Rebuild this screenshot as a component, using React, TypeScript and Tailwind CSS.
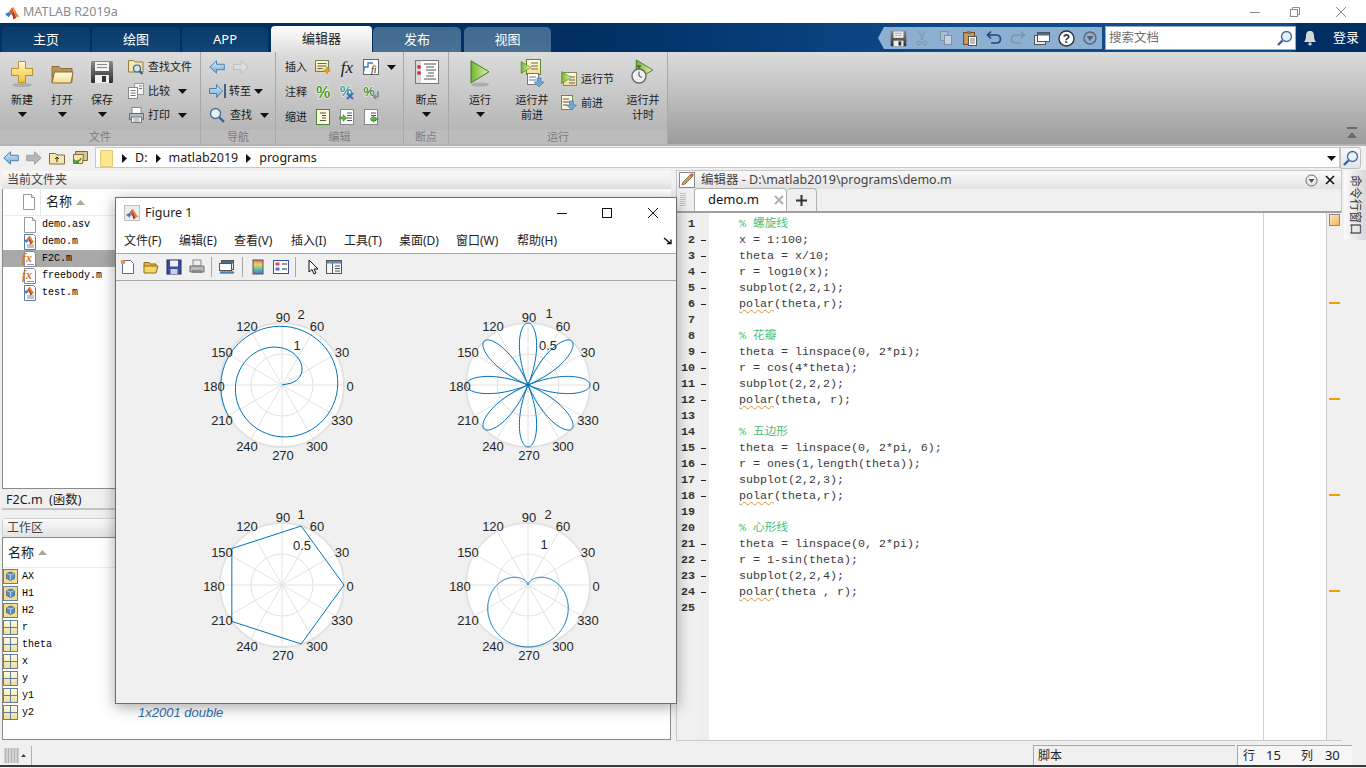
import React from "react";

type P = { children?: React.ReactNode; w?: number; h?: number };
const Svg = ({ w = 16, h = 16, children }: P) => (
  <svg width={w} height={h} viewBox={`0 0 ${w} ${h}`} className="block shrink-0">{children}</svg>
);

const Defs = () => (
  <svg width="0" height="0" className="block h-0 w-0 shrink-0">
    <defs>
      <linearGradient id="gy" x1="0" y1="0" x2="0" y2="1"><stop offset="0" stopColor="#fffbd0" /><stop offset="1" stopColor="#f2c02e" /></linearGradient>
      <linearGradient id="gp" x1="0" y1="0" x2="0" y2="1"><stop offset="0" stopColor="#fffde0" /><stop offset="1" stopColor="#f3dc8c" /></linearGradient>
      <linearGradient id="gb" x1="0" y1="0" x2="0" y2="1"><stop offset="0" stopColor="#dcecf8" /><stop offset="1" stopColor="#6ea8d8" /></linearGradient>
      <linearGradient id="gg" x1="0" y1="0" x2="1" y2="0"><stop offset="0" stopColor="#6fb52c" /><stop offset="1" stopColor="#e4f4b4" /></linearGradient>
      <linearGradient id="gd" x1="0" y1="0" x2="0" y2="1"><stop offset="0" stopColor="#8a8a8a" /><stop offset="1" stopColor="#2e2e2e" /></linearGradient>
      <linearGradient id="gc" x1="0" y1="0" x2="0" y2="1"><stop offset="0" stopColor="#f06060" /><stop offset=".3" stopColor="#f0d060" /><stop offset=".6" stopColor="#70c8a0" /><stop offset="1" stopColor="#5070d0" /></linearGradient>
    </defs>
  </svg>
);

const Caret = ({ c = "#111" }: { c?: string }) => (
  <svg width="9" height="5" viewBox="0 0 9 5" className="block shrink-0"><path d="M0 0h9L4.5 5z" fill={c} /></svg>
);

const Logo = ({ s = 16 }: { s?: number }) => (
  <svg width={s} height={s} viewBox="0 0 16 16" className="block shrink-0">
    <path d="M0 9.5l4-2 2.5 2L4 13z" fill="#3f7fc0" />
    <path d="M4 7.5L8 2l1 4-2.5 3.5z" fill="#d9602c" />
    <path d="M8 2c1.5 0 4 7 8 11-2-1-3-1-4 .5C10.500 10 9.500 6 8 2z" fill="#e8862a" />
    <path d="M6.500 9.500L9 6l3 7.500c-1.500 1-3 2-3 2-.5-3-1-5-2.500-6z" fill="#b8401c" />
  </svg>
);

const Page = ({ children }: P) => (
  <Svg>
    <path d="M2.500.5h8l3 3v12h-11z" fill="#fff" stroke="#9a9a9a" />
    <path d="M10.500.5v3h3" fill="#e8e8e8" stroke="#9a9a9a" />
    {children}
  </Svg>
);
const MFile = () => (
  <span className="relative block h-4 w-4 shrink-0">
    <Svg><path d="M2.500.5h9l2 2v13h-11z" fill="#fff" stroke="#5a7ba0" /><path d="M5 11h7M5 13h7" stroke="#7a8aa0" /></Svg>
    <span className="absolute left-[2px] top-0"><Logo s={11} /></span>
  </span>
);
const FxFile = () => (
  <Svg>
    <path d="M2.500.5h9l2 2v13h-11z" fill="#fff" stroke="#7a8aa0" />
    <text x="0" y="11" fontFamily="Liberation Serif" fontStyle="italic" fontWeight="700" fontSize="12" fill="#d9781c">fx</text>
    <path d="M5 13.500h7" stroke="#8a9ab0" />
  </Svg>
);
const VarIcon = () => (
  <Svg w={15} h={15}>
    <rect x=".5" y=".5" width="14" height="14" fill="url(#gp)" stroke="#5f7fa8" />
    <path d="M7.500 1v13M1 7.500h13" stroke="#5f7fa8" />
  </Svg>
);
const ObjIcon = () => (
  <Svg w={15} h={15}>
    <rect x=".5" y=".5" width="14" height="14" fill="#f2dc90" stroke="#5f7fa8" />
    <path d="M7.500 3l4 1.500v5l-4 2-4-2v-5z" fill="#5d8fc0" stroke="#3a5a80" strokeWidth=".7" />
    <path d="M3.500 4.500l4 1.500 4-1.500M7.500 6v5" stroke="#d8e8f4" strokeWidth=".7" fill="none" />
  </Svg>
);

const Plus = () => (
  <Svg w={24} h={28}>
    <ellipse cx="12" cy="25" rx="10" ry="2" fill="#888" opacity=".45" />
    <path d="M8.500 1.500h7v7h7v7h-7v7h-7v-7h-7v-7h7z" fill="url(#gy)" stroke="#b8902c" />
  </Svg>
);
const FolderBig = () => (
  <Svg w={24} h={24}>
    <path d="M2 4.500h7l2 2h11v14H2z" fill="#b8965a" stroke="#8a6c38" />
    <path d="M4.500 10h18.500l-2 11H2z" fill="url(#gp)" stroke="#8a6c38" />
  </Svg>
);
const Floppy = ({ s = 24 }: { s?: number }) => (
  <svg width={s} height={s} viewBox="0 0 24 24" className="block shrink-0">
    <rect x="1" y="1" width="22" height="22" rx="1.500" fill="url(#gd)" />
    <rect x="5" y="2" width="14" height="9" fill="#f4f4f4" />
    <path d="M7 4.500h10M7 7.500h10" stroke="#888" />
    <rect x="5" y="15" width="14" height="8" fill="#f0f0f0" />
    <rect x="12" y="16" width="4" height="6" fill="#333" />
  </svg>
);
const FindFile = () => (
  <Svg>
    <path d="M.5 1.500h5l1.500 1.500h8v10H.5z" fill="#f3e7b4" stroke="#9a7c3c" />
    <circle cx="9" cy="9.500" r="3.500" fill="#cfe4f6" stroke="#3c6088" strokeWidth="1.200" />
    <path d="M11.500 12l3 3" stroke="#2a5a9a" strokeWidth="2" />
  </Svg>
);
const Compare = () => (
  <Svg>
    <rect x="6.500" y=".5" width="9" height="11" fill="#f4f4f4" stroke="#999" />
    <rect x=".5" y="4.500" width="9" height="11" fill="#fff" stroke="#888" />
    <path d="M2.500 7.500h5M2.500 10h5M2.500 12.500h5M11 3h3M11 5.500h3" stroke="#777" />
  </Svg>
);
const Printer = () => (
  <Svg>
    <rect x="4" y=".5" width="9" height="6" fill="#fff" stroke="#888" />
    <path d="M1.500 6.500h14v6h-14z" fill="#b4bcc4" stroke="#6a6a6a" />
    <rect x="3.500" y="10" width="10" height="5.500" fill="#fff" stroke="#777" />
    <path d="M5.500 12h6M5.500 14h6" stroke="#888" />
  </Svg>
);
const Back = ({ off, flip, w = 16 }: { off?: boolean; flip?: boolean; w?: number }) => (
  <svg width={w} height="14" viewBox="0 0 16 14" className={flip ? "block shrink-0 -scale-x-100" : "block shrink-0"}>
    <path d="M.8 7L7.500.8v3.500h7.800v5.400H7.500v3.500z" fill={off ? "#dedede" : "url(#gb)"} stroke={off ? "#bdbdbd" : "#4f7fae"} />
  </svg>
);
const GoTo = () => (
  <Svg w={18} h={16}>
    <path d="M.5 5.500h7V1.500l6 6.500-6 6.500v-4h-7z" fill="url(#gb)" stroke="#4f7fae" />
    <path d="M16 1v14" stroke="#3f5f88" strokeWidth="2" />
  </Svg>
);
const Glass = ({ left }: { left?: boolean }) => (
  <svg width="16" height="16" viewBox="0 0 16 16" className={left ? "block shrink-0 -scale-x-100" : "block shrink-0"}>
    <circle cx="6.500" cy="6.500" r="5" fill="#e4f0fa" stroke="#4a6a90" strokeWidth="1.300" />
    <path d="M10.500 10.500l4.500 4.500" stroke="#2f62a8" strokeWidth="2.400" />
  </svg>
);
const InsertDoc = () => (
  <Svg>
    <rect x=".5" y="1.500" width="13" height="11" fill="url(#gp)" stroke="#7a7a5a" />
    <path d="M2.500 4.500h9M2.500 7h9M2.500 9.500h5" stroke="#666" />
    <path d="M12 8v7M8.500 11.500h7" stroke="#d8a020" strokeWidth="2.200" />
  </Svg>
);
const FBox = () => (
  <Svg>
    <rect x=".5" y=".5" width="15" height="15" fill="#fff" stroke="#666" />
    <path d="M1 12V8h4V4h5" fill="none" stroke="#3a7ac0" strokeWidth="1.300" />
    <text x="8" y="13.500" fontFamily="Liberation Serif" fontStyle="italic" fontSize="10" fill="#222">fi</text>
  </Svg>
);
const Pct = () => (
  <Svg w={16} h={16}>
    <text x="8" y="14" textAnchor="middle" fontFamily="Liberation Sans" fontWeight="700" fontSize="16" fill="#3f9a2c" stroke="#fff" strokeWidth="1.200" paintOrder="stroke">%</text>
  </Svg>
);
const PctX = () => (
  <Svg>
    <text x="7" y="12" textAnchor="middle" fontFamily="Liberation Sans" fontWeight="700" fontSize="14" fill="#3f9a9a" stroke="#fff" strokeWidth="1" paintOrder="stroke">%</text>
    <path d="M8 9l6 6M14 9l-6 6" stroke="#3a70b8" strokeWidth="2" />
  </Svg>
);
const PctW = () => (
  <Svg>
    <text x="6" y="12" textAnchor="middle" fontFamily="Liberation Sans" fontWeight="700" fontSize="13" fill="#3f8a4a" stroke="#fff" strokeWidth="1" paintOrder="stroke">%</text>
    <path d="M15 7v6h-4M13 10.500L10.500 13l2.500 2.500" fill="none" stroke="#666" />
  </Svg>
);
const Indent = ({ v }: { v: 0 | 1 | 2 }) => (
  <Svg>
    <rect x="1.500" y=".5" width="13" height="15" fill={v === 0 ? "#fff8d8" : "#fff"} stroke={v === 0 ? "#3f8a2c" : "#888"} />
    <path d={v === 0 ? "M5 4h6M7 6.500h4M7 9h4M5 11.500h6" : "M8 4h5M8 6.500h5M8 9h5M8 11.500h5"} stroke="#555" />
    {v === 1 && <path d="M0 8h4V5.500L8 9l-4 3.500V10H0z" fill="#5fb23a" stroke="#3f8a2c" strokeWidth=".5" />}
    {v === 2 && <path d="M15 9h-4V6.500L7 10l4 3.500V11h4z" fill="#5fb23a" stroke="#3f8a2c" strokeWidth=".5" />}
  </Svg>
);
const Breakpt = () => (
  <span className="mb-[3px] block">
    <Svg w={24} h={25}>
      <rect x=".5" y=".5" width="23" height="23" fill="#fdfdfd" stroke="#777" />
      <rect x="1" y="1" width="5" height="22" fill="#d8d8d8" />
      <circle cx="4" cy="7" r="2" fill="#d43c3c" /><circle cx="4" cy="13" r="2" fill="#d43c3c" />
      <path d="M9 4h12M11 7h8M11 10h10M13 13h6M11 16h8M9 19h12" stroke="#555" />
    </Svg>
  </span>
);
const Play = ({ w = 20, h = 24 }: { w?: number; h?: number }) => (
  <svg width={w} height={h} viewBox="0 0 20 24" className="block shrink-0">
    <path d="M1 1l18 11L1 23z" fill="url(#gg)" stroke="#3f7a1c" />
  </svg>
);
const PlayBig = () => (
  <span className="mb-[2px] block">
    <Svg w={20} h={27}>
      <ellipse cx="10" cy="24.500" rx="9" ry="2" fill="#888" opacity=".45" />
      <path d="M1 .8l18 11L1 22.800z" fill="url(#gg)" stroke="#3f7a1c" />
    </Svg>
  </span>
);
const RunAdv = () => (
  <span className="relative block h-[30px] w-6 shrink-0">
    <span className="absolute left-[6px] top-0">
      <Svg w={15} h={16}><rect x=".5" y=".5" width="14" height="15" fill="url(#gp)" stroke="#5f8a2c" /><path d="M5 4h7M5 7h7M5 10h7" stroke="#666" /></Svg>
    </span>
    <span className="absolute left-[7px] top-[14px]">
      <Svg w={18} h={15}><rect x=".5" y=".5" width="11" height="11" fill="#fff" stroke="#777" /><path d="M2 4h7M2 7h7" stroke="#777" /><path d="M10 5h4v4h3l-5 5-5-5h3z" fill="#6ea8d8" stroke="#3f6f9f" strokeWidth=".6" /></Svg>
    </span>
    <span className="absolute left-0 top-[2px]"><Play w={12} h={13} /></span>
  </span>
);
const RunSec = () => (
  <span className="relative block h-4 w-4 shrink-0">
    <Svg><rect x="2.500" y="1.500" width="13" height="13" fill="url(#gp)" stroke="#8a8a5a" /><path d="M8 6h6M8 9h6M8 12h6" stroke="#666" /></Svg>
    <span className="absolute left-0 top-0"><Play w={11} h={13} /></span>
  </span>
);
const Adv = () => (
  <Svg>
    <rect x=".5" y=".5" width="11" height="14" fill="#fff8d8" stroke="#6a8a4a" />
    <path d="M2 4h6M2 7h6M2 10h4" stroke="#555" />
    <path d="M8.500 6h4v4h3l-5 5-5-5h3z" fill="#6ea8d8" stroke="#3f6f9f" strokeWidth=".6" />
  </Svg>
);
const RunTime = () => (
  <span className="relative block h-[30px] w-6 shrink-0">
    <span className="absolute left-[4px] top-0"><Play w={19} h={22} /></span>
    <span className="absolute left-0 top-[6px]">
      <Svg w={16} h={19}>
        <path d="M6 1h4M8 1v3" stroke="#555" strokeWidth="1.300" />
        <circle cx="8" cy="11" r="7" fill="#eef0f2" stroke="#666" strokeWidth="1.300" />
        <path d="M8 6.500V11l3 1.500" fill="none" stroke="#445" strokeWidth="1" />
      </Svg>
    </span>
  </span>
);

const Big = ({ w, lines, caret, children }: { w: number; lines: string[]; caret?: boolean; children: React.ReactNode }) => (
  <div className="flex flex-col items-center" style={{ width: w }}>
    <div className="flex h-[32px] items-center justify-center">{children}</div>
    <div className="mt-[2px] flex flex-col items-center leading-[15px]">
      {lines.map((l) => <span key={l}>{l}</span>)}
      {caret && <span className="mt-[5px]"><Caret /></span>}
    </div>
  </div>
);

const Group = ({ label, w, children }: { label: string; w: number; children: React.ReactNode }) => (
  <div className="flex h-full shrink-0 flex-col border-r border-[#a8a8a8]" style={{ width: w }}>
    <div className="flex h-[78px] bg-[linear-gradient(180deg,#dcdcdc,#b6b6b6)]">{children}</div>
    <div className="flex h-[14px] items-center justify-center bg-[#bcbcbc] pb-[1px] text-[11px] leading-[13px] text-[#7d7d7d]">{label}</div>
  </div>
);

const SRow = ({ children, cls = "" }: { children: React.ReactNode; cls?: string }) => (
  <div className={"flex h-[24px] items-center " + cls}>{children}</div>
);
const Cell = ({ children }: { children: React.ReactNode }) => (
  <div className="flex h-[24px] w-[24px] items-center justify-center">{children}</div>
);

const tabsDark = ["主页", "绘图", "APP"];

const Win = ({ c, kind }: { c: string; kind: "min" | "max" | "res" | "x" }) => (
  <Svg w={12} h={12}>
    {kind === "min" && <path d="M1 6.500h10" stroke={c} />}
    {kind === "max" && <rect x="1.500" y="1.500" width="9" height="9" fill="none" stroke={c} />}
    {kind === "res" && <><rect x="1.500" y="3.500" width="7" height="7" fill="none" stroke={c} /><path d="M3.500 3.500v-2h7v7h-2" fill="none" stroke={c} /></>}
    {kind === "x" && <path d="M1 1l10 10M11 1L1 11" stroke={c} />}
  </Svg>
);

const Qa = ({ children }: { children: React.ReactNode }) => (
  <div className="flex h-full w-[24px] items-center justify-center">{children}</div>
);

const TopBar = () => (
  <div className="flex h-[29px] shrink-0 items-end bg-[linear-gradient(90deg,#003263_0%,#002e62_42%,#0e4c8b_70%,#0e4c8b_94.500%,#002e62_95%)] pl-[2px]">
    {tabsDark.map((t, i) => (
      <div key={t} className={"flex h-[25px] items-center justify-center rounded-t-[5px] bg-[linear-gradient(180deg,#0a3b6a,#114676)] text-[13px] text-white " + (i === 2 ? "w-[86px]" : "mr-[2px] w-[88px]")}>{t}</div>
    ))}
    <div className="ml-[3px] mr-[1px] flex h-[26px] w-[101px] items-center justify-center rounded-t-[4px] bg-[linear-gradient(180deg,#ffffff,#dedede)] text-[13px] text-[#222]">编辑器</div>
    <div className="mr-[3px] flex h-[25px] w-[88px] items-center justify-center rounded-t-[5px] bg-[linear-gradient(180deg,#3f6a90,#4a7094)] text-[13px] text-white">发布</div>
    <div className="flex h-[25px] w-[87px] items-center justify-center rounded-t-[5px] bg-[linear-gradient(180deg,#3f6a90,#4a7094)] text-[13px] text-white">视图</div>
    <div className="mb-[3px] ml-auto flex h-[22px] w-[224px] items-center bg-[#8cafd2] pl-[8px] [clip-path:polygon(6px_0,100%_0,100%_100%,6px_100%,0_50%)]">
      <Qa><Floppy s={17} /></Qa>
      <Qa><Svg><path d="M5 1l4 9M11 1L7 10" stroke="#7f93a8" /><circle cx="5" cy="13" r="2" fill="none" stroke="#7f93a8" /><circle cx="11" cy="13" r="2" fill="none" stroke="#7f93a8" /></Svg></Qa>
      <Qa><Svg><rect x="2.500" y="1.500" width="7" height="9" fill="#a9bdd2" stroke="#7f93a8" /><rect x="6.500" y="5.500" width="7" height="9" fill="#c4d2e2" stroke="#7f93a8" /></Svg></Qa>
      <Qa><Svg><rect x="1.500" y="2.500" width="11" height="12" fill="#c89a58" stroke="#705020" /><rect x="5" y="1" width="4" height="3" fill="#777" /><rect x="6.500" y="6.500" width="8" height="9" fill="#fff" stroke="#555" /><path d="M8 9h5M8 11h5M8 13h5" stroke="#777" /></Svg></Qa>
      <Qa><Svg><path d="M5 1.500L1.500 5 5 8.500M2 5h8c3 0 4.500 1.500 4.500 4s-1.500 4-4.500 4H5" fill="none" stroke="#244a78" strokeWidth="1.700" /></Svg></Qa>
      <Qa><Svg><path d="M11 1.500L14.500 5 11 8.500M14 5H6c-3 0-4.500 1.500-4.500 4s1.500 4 4.500 4h5" fill="none" stroke="#7f93a8" strokeWidth="1.700" /></Svg></Qa>
      <Qa><Svg><rect x=".5" y="5.500" width="11" height="9" fill="#e8e8e8" stroke="#555" /><rect x="3.500" y="2.500" width="12" height="9" fill="#fff" stroke="#555" /><rect x="4" y="3" width="11" height="2.500" fill="#3f6f9f" /></Svg></Qa>
      <Qa><svg width="17" height="17" viewBox="0 0 17 17" className="block"><circle cx="8.500" cy="8.500" r="7.500" fill="#fff" stroke="#333" strokeWidth="1.400" /><text x="8.500" y="13" textAnchor="middle" fontFamily="Liberation Sans" fontWeight="700" fontSize="12" fill="#234">?</text></svg></Qa>
      <Qa><svg width="14" height="14" viewBox="0 0 14 14" className="block"><circle cx="7" cy="7" r="6" fill="none" stroke="#5a6470" strokeWidth="1.300" /><path d="M3.500 5h7L7 10z" fill="#5a6470" /></svg></Qa>
    </div>
    <div className="mb-[2px] ml-[3px] flex h-[24px] w-[191px] items-center border border-[#9aa8b8] bg-white pl-[3px] pr-[2px] text-[12.500px] text-[#6f6f6f]">
      <span className="flex-1">搜索文档</span><Glass left />
    </div>
    <div className="flex h-[29px] w-[70px] items-center pl-[7px] text-[13px] text-white">
      <Svg w={14} h={18}><path d="M7 2c3 0 4 2 4 5 0 3 1 5 2 6H1c1-1 2-3 2-6 0-3 1-5 4-5z" fill="#d8d8d8" /><circle cx="7" cy="15" r="1.800" fill="#c0c0c0" /></Svg>
      <span className="ml-[16px]">登录</span>
    </div>
  </div>
);

const Ribbon = () => (
  <div className="flex h-[92px] shrink-0 bg-[linear-gradient(180deg,#dcdcdc,#9c9c9c)] text-[11px] text-[#1a1a1a]">
    <Group label="文件" w={201}>
      <div className="flex pl-[2px] pt-[6px]">
        <Big w={40} lines={["新建"]} caret><Plus /></Big>
        <Big w={40} lines={["打开"]} caret><FolderBig /></Big>
        <Big w={40} lines={["保存"]} caret><span className="mb-[4px] block"><Floppy /></span></Big>
      </div>
      <div className="ml-[6px] pt-[3px]">
        <SRow><FindFile /><span className="ml-[4px]">查找文件</span></SRow>
        <SRow><Compare /><span className="ml-[4px]">比较</span><span className="ml-[8px]"><Caret /></span></SRow>
        <SRow><Printer /><span className="ml-[4px]">打印</span><span className="ml-[8px]"><Caret /></span></SRow>
      </div>
    </Group>
    <Group label="导航" w={75}>
      <div className="pl-[8px] pt-[3px]">
        <SRow><Back /><span className="ml-[8px]"><Back off flip /></span></SRow>
        <SRow><GoTo /><span className="ml-[2px] mr-[3px]">转至</span><Caret /></SRow>
        <SRow><Glass /><span className="ml-[5px] mr-[8px]">查找</span><Caret /></SRow>
      </div>
    </Group>
    <Group label="编辑" w={128}>
      <div className="grid grid-cols-[26px_24px_24px_24px_14px] pl-[9px] pt-[3px]">
        <SRow>插入</SRow><Cell><InsertDoc /></Cell>
        <Cell><span className="font-['Liberation_Serif',serif] text-[17px] italic leading-none">fx</span></Cell>
        <Cell><FBox /></Cell><div className="flex h-[24px] items-center pl-[4px]"><Caret /></div>
        <SRow>注释</SRow><Cell><Pct /></Cell><Cell><PctX /></Cell><Cell><PctW /></Cell><div />
        <SRow>缩进</SRow><Cell><Indent v={0} /></Cell><Cell><Indent v={1} /></Cell><Cell><Indent v={2} /></Cell><div />
      </div>
    </Group>
    <Group label="断点" w={45}>
      <div className="pt-[6px]"><Big w={45} lines={["断点"]} caret><Breakpt /></Big></div>
    </Group>
    <Group label="运行" w={219}>
      <div className="flex pl-[6px] pt-[6px]">
        <Big w={50} lines={["运行"]} caret><PlayBig /></Big>
        <Big w={54} lines={["运行并", "前进"]}><RunAdv /></Big>
        <div className="ml-[2px] w-[57px] pt-[9px]">
          <SRow><RunSec /><span className="ml-[4px]">运行节</span></SRow>
          <SRow><Adv /><span className="ml-[4px]">前进</span></SRow>
        </div>
        <Big w={50} lines={["运行并", "计时"]}><RunTime /></Big>
      </div>
    </Group>
    <div className="flex flex-1 items-end justify-end pb-[5px] pr-[8px]">
      <Svg w={12} h={12}><path d="M1 1h10" stroke="#6a6a6a" strokeWidth="2" /><path d="M1 11l5-6 5 6z" fill="#6a6a6a" /></Svg>
    </div>
  </div>
);

const Sep = () => <svg width="5" height="9" viewBox="0 0 5 9" className="block shrink-0"><path d="M0 0l5 4.500L0 9z" fill="#111" /></svg>;

const AddressBar = () => (
  <div className="flex h-[25px] shrink-0 items-center border-t-2 border-[#b4b4b4] bg-[#f0f0f0] pl-[3px] pr-[3px]">
    <Back />
    <span className="ml-[7px]"><svg width="16" height="14" viewBox="0 0 16 14" className="block -scale-x-100"><path d="M.8 7L7.500.8v3.500h7.800v5.400H7.500v3.500z" fill="#b8b8b8" stroke="#a0a0a0" /></svg></span>
    <span className="ml-[7px]"><Svg><path d="M.5 3.500h6l1 1.500h8v9H.5z" fill="#f6e6b0" stroke="#8a6c38" /><path d="M8 7v5M6 9l2-2 2 2" fill="none" stroke="#222" /></Svg></span>
    <span className="ml-[7px]"><Svg><path d="M3.500 1.500h12v9h-12z" fill="#d8c890" stroke="#7a6a38" /><path d="M1.500 4.500h10l-1 9h-9z" fill="#f6e6b0" stroke="#8a6c38" /><path d="M9 8a4 4 0 0 1-5 3l-1 2M2 9.500l1.500 3.500L7 12" fill="none" stroke="#3f9a2c" strokeWidth="1.400" /></Svg></span>
    <div className="ml-[7px] flex h-[21px] w-[1245px] items-center border border-[#c8c8c8] bg-white pl-[4px] pt-[1px] text-[12.500px] text-[#1a1a1a]">
      <Svg w={13} h={17}><path d="M.5.500h12v16H.5z" fill="#fde68f" stroke="#e2c870" /></Svg>
      <span className="ml-[9px]"><Sep /></span><span className="ml-[8px]">D:</span>
      <span className="ml-[9px]"><Sep /></span><span className="ml-[7px]">matlab2019</span>
      <span className="ml-[8px]"><Sep /></span><span className="ml-[8px]">programs</span>
      <span className="ml-auto mr-[3px]"><Caret /></span>
    </div>
    <div className="flex h-[22px] w-[21px] items-center justify-center rounded-r-[3px] border border-[#c0c0c0] bg-[linear-gradient(180deg,#f6f8fc,#dfe6f2)]"><Glass left /></div>
  </div>
);

const files: [string, "p" | "m" | "f"][] = [["demo.asv", "p"], ["demo.m", "m"], ["F2C.m", "f"], ["freebody.m", "f"], ["test.m", "m"]];
const vars: [string, boolean][] = [["AX", true], ["H1", true], ["H2", true], ["r", false], ["theta", false], ["x", false], ["y", false], ["y1", false], ["y2", false]];
const Sort = () => <svg width="9" height="5" viewBox="0 0 9 5" className="block shrink-0"><path d="M4.500 0L9 5H0z" fill="#a9a890" /></svg>;
const mono = "font-['Liberation_Mono','Noto_Sans_CJK_SC',monospace]";

const PanelHead = ({ t, pad }: { t: string; pad: number }) => (
  <div className="flex h-[18px] shrink-0 items-center bg-[linear-gradient(180deg,#fafafa,#e2e2e2)] text-[12px] leading-[18px] text-[#444]" style={{ paddingLeft: pad }}>{t}</div>
);

const LeftPanels = () => (
  <div className="flex w-[671px] shrink-0 flex-col pl-[2px] pt-[1px] text-[12px]">
    <PanelHead t="当前文件夹" pad={5} />
    <div className="flex h-[300px] flex-col border-b border-l border-[#8a8a8a] bg-white">
      <div className="flex h-[27px] shrink-0 items-center border-b border-[#ececec]">
        <span className="ml-[18px]"><Page /></span>
        <span className="ml-[3px] h-[25px] border-l border-[#e6e6e6]" />
        <span className="ml-[5px] text-[13px] text-[#222]">名称</span>
        <span className="ml-[4px]"><Sort /></span>
      </div>
      {files.map(([n, k]) => (
        <div key={n} className={"flex h-[17px] shrink-0 items-center pl-[19px] " + (n === "F2C.m" ? "bg-[#a9a9a9]" : "")}>
          {k === "p" ? <Page /> : k === "m" ? <MFile /> : <FxFile />}
          <span className={"ml-[4px] text-[10px] text-[#000] " + mono}>{n}</span>
        </div>
      ))}
    </div>
    <div className="flex h-[21px] shrink-0 items-center border-b-2 border-[#c4c4c4] pl-[4px] pt-[4px] text-[12.500px] text-[#222]">F2C.m&nbsp;&nbsp;(函数)</div>
    <div className="h-[8px] shrink-0" />
    <div className="rounded-t-[3px] border-x border-t border-[#d0d0d0]"><PanelHead t="工作区" pad={4} /></div>
    <div className="flex h-[203px] flex-col border border-[#8a8a8a] bg-white">
      <div className="flex h-[30px] shrink-0 items-center border-b border-[#ececec] pl-[5px]">
        <span className="text-[13px] text-[#222]">名称</span><span className="ml-[4px]"><Sort /></span>
      </div>
      {vars.map(([n, o]) => (
        <div key={n} className="flex h-[17px] shrink-0 items-center">
          {o ? <ObjIcon /> : <VarIcon />}
          <span className={"ml-[4px] w-[116px] text-[10px] text-[#000] " + mono}>{n}</span>
          {n === "y2" && <span className="font-['Liberation_Sans',sans-serif] text-[13px] italic text-[#2f6fae]">1x2001 double</span>}
        </div>
      ))}
    </div>
  </div>
);

const code = [
  "c% 螺旋线", "x = 1:100;", "theta = x/10;", "r = log10(x);", "subplot(2,2,1);", "ppolar(theta,r);", "", "c% 花瓣",
  "theta = linspace(0, 2*pi);", "r = cos(4*theta);", "subplot(2,2,2);", "ppolar(theta, r);", "", "c% 五边形",
  "theta = linspace(0, 2*pi, 6);", "r = ones(1,length(theta));", "subplot(2,2,3);", "ppolar(theta,r);", "", "c% 心形线",
  "theta = linspace(0, 2*pi);", "r = 1-sin(theta);", "subplot(2,2,4);", "ppolar(theta , r);", "",
];

const Line = ({ s }: { s: string }) => {
  if (s[0] === "c") return <span className="text-[#4cc07a]">{s.slice(1)}</span>;
  if (s[0] === "p") return <><span className="underline decoration-[#e8902c] decoration-wavy decoration-1 underline-offset-2">polar</span>{s.slice(6)}</>;
  return <>{s}</>;
};

const Editor = () => (
  <div className="flex h-[571px] w-[666px] shrink-0 flex-col border border-[#c8c8c8] text-[12px]">
    <div className="flex h-[18px] shrink-0 items-center bg-[linear-gradient(180deg,#fafafa,#e2e2e2)] pl-[2px] pr-[6px] text-[12.500px] text-[#444]">
      <Svg><rect x=".5" y=".5" width="15" height="15" fill="#fff" stroke="#888" /><path d="M3 13l1-3 8-8 2 2-8 8z" fill="#d8a040" stroke="#555" strokeWidth=".7" /><path d="M11 3l2-2 2 2-2 2z" fill="#d8504c" /></Svg>
      <span className="ml-[6px]">编辑器 - D:\matlab2019\programs\demo.m</span>
      <svg width="13" height="13" viewBox="0 0 13 13" className="ml-auto block"><circle cx="6.500" cy="6.500" r="5.500" fill="none" stroke="#666" /><path d="M3.500 5h6l-3 4z" fill="#555" /></svg>
      <span className="ml-[7px]"><Svg w={10} h={10}><path d="M1 1l8 8M9 1L1 9" stroke="#111" strokeWidth="1.600" /></Svg></span>
    </div>
    <div className="flex h-[24px] shrink-0 items-end border-b-2 border-[#a0a0a0] bg-[#f0f0f0] pl-[3px]">
      <span className="mb-[3px] mr-[8px]"><Svg w={6} h={16}><path d="M0 1.500h6M0 3.500h6M0 5.500h6M0 7.500h6M0 9.500h6M0 11.500h6M0 13.500h6" stroke="#c4c4c4" /></Svg></span>
      <div className="flex h-[23px] w-[93px] items-center rounded-t-[4px] border-x border-t border-[#b0b0b0] bg-white pl-[13px] text-[13px] text-[#111]">
        demo.m
        <span className="ml-[15px]"><Svg w={10} h={10}><path d="M1 1l8 8M9 1L1 9" stroke="#b0b0b0" strokeWidth="2" /></Svg></span>
      </div>
      <div className="flex h-[23px] w-[30px] items-center justify-center rounded-t-[4px] border-r border-t border-[#b0b0b0] bg-[#f0f0f0] text-[#333]">
        <Svg w={11} h={11}><path d="M5.500 0v11M0 5.500h11" stroke="#333" strokeWidth="2" /></Svg>
      </div>
    </div>
    <div className="flex min-h-0 flex-1 bg-white">
      <div className={"w-[21px] shrink-0 bg-[#f0f0f0] pr-[3px] pt-[3px] text-right text-[11.670px] font-bold leading-[16px] text-[#333] " + mono}>
        {code.map((_, i) => <div key={i}>{i + 1}</div>)}
      </div>
      <div className="w-[11px] shrink-0 bg-[#eeeeee] pl-[3px] pt-[3px]">
        {code.map((c, i) => (
          <div key={i} className="flex h-[16px] items-center">
            {c && c[0] !== "c" ? <div className="h-px w-[5px] bg-[#222]" /> : null}
          </div>
        ))}
      </div>
      <div className={"w-[555px] shrink-0 whitespace-pre border-r border-[#cfcfcf] pl-[30px] pt-[3px] text-[11.670px] leading-[16px] text-[#3a3a3a] " + mono}>
        {code.map((c, i) => <div key={i} className="h-[16px]"><Line s={c} /></div>)}
      </div>
      <div className="w-[62px] shrink-0" />
      <div className="flex w-[16px] shrink-0 flex-col border-l border-[#cfcfcf] bg-[#f0f0f0] pl-[2px] pr-[1px] pt-[1px]">
        <div className="h-[12px] w-[11px] border border-[#8a8a8a] bg-[linear-gradient(135deg,#fde8c4,#f9b05a)]" />
        {[0, 1, 2, 3].map((i) => <div key={i} className={"h-[2px] w-[11px] bg-[#f79a00] " + (i === 0 ? "mt-[76px]" : "mt-[94px]")} />)}
      </div>
    </div>
  </div>
);

const spokes = [0, 30, 60, 90, 120, 150];
const labels: [string, number, number][] = [["90", 1, -68], ["60", 35, -59], ["30", 60, -33], ["0", 68, 1], ["330", 60, 35], ["300", 35, 61], ["270", 1, 70], ["240", -35, 61], ["210", -60, 35], ["180", -68, 1], ["150", -60, -33], ["120", -35, -59]];
const R = 62;
const pathOf = (n: number, t: (i: number) => number, r: (i: number) => number, s: number) => {
  let d = "";
  for (let i = 0; i < n; i++) {
    const a = t(i), q = r(i) * s;
    d += (i ? "L" : "M") + (100 + q * Math.cos(a)).toFixed(2) + " " + (100 - q * Math.sin(a)).toFixed(2);
  }
  return d;
};
const line = (n: number) => (i: number) => (2 * Math.PI * i) / (n - 1);
const plots = [
  { d: pathOf(100, (i) => (i + 1) / 10, (i) => Math.log10(i + 1), 31), ticks: [["1", 15, -40], ["2", 19, -71]] },
  { d: pathOf(400, line(400), (i) => Math.cos(4 * line(400)(i)), R), ticks: [["0.5", 20, -40], ["1", 21, -72]] },
  { d: pathOf(6, line(6), () => 1, R), ticks: [["0.5", 20, -40], ["1", 19, -71]] },
  { d: pathOf(400, line(400), (i) => 1 - Math.sin(line(400)(i)), 31), ticks: [["1", 16, -41], ["2", 20, -71]] },
];
const Polar = ({ d, ticks }: { d: string; ticks: (string | number)[][] }) => (
  <svg width="200" height="200" viewBox="0 0 200 200" className="block">
    <circle cx="100" cy="100" r={R} fill="#fff" stroke="#e2e2e2" strokeWidth="2" />
    <circle cx="100" cy="100" r={R / 2} fill="none" stroke="#e2e2e2" />
    {spokes.map((a) => {
      const c = Math.cos((a * Math.PI) / 180) * R, s = Math.sin((a * Math.PI) / 180) * R;
      return <path key={a} d={`M${100 - c} ${100 + s}L${100 + c} ${100 - s}`} stroke="#e2e2e2" />;
    })}
    <path d={d} fill="none" stroke="#0072bd" strokeWidth="1" />
    <g fontFamily="Liberation Sans" fontSize="13" fill="#262626" textAnchor="middle">
      {labels.map(([t, x, y]) => <text key={t} x={100 + x} y={100 + y + 5}>{t}</text>)}
      {ticks.map(([t, x, y]) => <text key={String(t)} x={100 + Number(x)} y={100 + Number(y) + 5}>{t}</text>)}
    </g>
  </svg>
);

const menus = ["文件(F)", "编辑(E)", "查看(V)", "插入(I)", "工具(T)", "桌面(D)", "窗口(W)", "帮助(H)"];
const menuW = [55, 55, 57, 53, 55, 57, 61, 50];

const TB = ({ children, w = 23 }: { children: React.ReactNode; w?: number }) => (
  <div className="flex h-full items-center justify-center" style={{ width: w }}>{children}</div>
);
const TS = () => <div className="mx-[3px] h-[20px] w-px bg-[#a8a8a8]" />;

const Figure = () => (
  <div className="absolute left-[115px] top-[197px] flex h-[507px] w-[562px] flex-col border border-[#6e6e6e] bg-[#f0f0f0] shadow-[0_3px_14px_rgba(0,0,0,0.35)]">
    <div className="flex h-[30px] shrink-0 items-center bg-white pl-[8px] text-[#222]">
      <span className="flex h-[16px] w-[16px] items-center justify-center border border-[#c0c0c0] bg-[#e8eef4]"><Logo s={13} /></span>
      <span className="ml-[5px] font-['Noto_Sans',sans-serif] text-[12.500px]">Figure 1</span>
      <span className="ml-auto"><Win c="#111" kind="min" /></span>
      <span className="ml-[33px]"><Win c="#111" kind="max" /></span>
      <span className="ml-[34px] mr-[17px]"><Win c="#111" kind="x" /></span>
    </div>
    <div className="flex h-[26px] shrink-0 items-center border-b border-[#a8a8a8] bg-white pl-[8px] text-[12px] text-[#222]">
      {menus.map((m, i) => <span key={m} style={{ width: menuW[i] }}>{m}</span>)}
      <span className="ml-auto mr-[4px]"><Svg w={9} h={9}><path d="M1 2l6 5M4 7.500h4V3.500" fill="none" stroke="#111" strokeWidth="1.400" /></Svg></span>
    </div>
    <div className="flex h-[27px] shrink-0 items-center border-b border-[#a8a8a8]">
      <TB><Svg><path d="M2.500 1.500h8l3 3v10h-11z" fill="#fff" stroke="#4f6f98" /><circle cx="3" cy="3" r="2.300" fill="#f08a4a" /></Svg></TB>
      <TB><Svg><path d="M1 3.500h5l1 1.500h6v3H1z" fill="#e0b840" stroke="#8a6c1c" /><path d="M1 7h14l-2 7H1z" fill="#f6d860" stroke="#8a6c1c" /></Svg></TB>
      <TB><Svg><rect x="1" y="1" width="14" height="14" fill="#3a4ea0" stroke="#1f2a60" /><rect x="4" y="1.500" width="8" height="6" fill="#f0f0f0" /><rect x="4.500" y="10" width="7" height="5" fill="#ccd" /></Svg></TB>
      <TB><Svg><rect x="4" y="1" width="8" height="6" fill="#eee" stroke="#888" /><path d="M1 7h14v6H1z" fill="#b8b8b8" stroke="#707070" /><rect x="3" y="11" width="10" height="3" fill="#888" /></Svg></TB>
      <TS />
      <TB w={24}><Svg><rect x="2.500" y="1.500" width="12" height="9" fill="#e8e8e8" stroke="#555" /><rect x="3" y="2" width="11" height="2.500" fill="#3f6f9f" /><rect x=".5" y="4.500" width="12" height="7" fill="#fff" stroke="#555" /><path d="M2 13.500h5M9 13.500h5" stroke="#4f7fae" strokeWidth="2.400" strokeLinecap="round" /></Svg></TB>
      <TS />
      <TB w={23}><Svg><rect x="3" y="1" width="10" height="14" fill="url(#gc)" stroke="#555" /></Svg></TB>
      <TB w={23}><Svg><rect x=".5" y="1.500" width="15" height="13" fill="#fff" stroke="#3a4ea0" /><rect x="2.500" y="3.500" width="4" height="3" fill="#d84c4c" /><rect x="2.500" y="8.500" width="4" height="3" fill="#5a68d8" /><path d="M9 5h5M9 10h5" stroke="#333" /></Svg></TB>
      <TS />
      <TB w={25}><Svg><path d="M5 1v12l3-2.500 2 4.500 2-1-2-4h4z" fill="#fff" stroke="#111" /></Svg></TB>
      <TB w={20}><Svg><rect x=".5" y="1.500" width="15" height="13" fill="#f4f4f4" stroke="#555" /><rect x="1" y="2" width="14" height="2.500" fill="#6a8ab0" /><path d="M6.500 4v10" stroke="#555" /><path d="M9 7h5M9 9.500h5M9 12h5" stroke="#555" /></Svg></TB>
    </div>
    <div className="grid flex-1 grid-cols-[200px_200px] grid-rows-[200px_200px] gap-x-[46px] pl-[66px] pt-[4px]">
      {plots.map((p, i) => <Polar key={i} d={p.d} ticks={p.ticks} />)}
    </div>
  </div>
);

const Status = () => (
  <div className="flex h-[21px] shrink-0 items-end bg-[#f0f0f0] text-[12px] text-[#222]">
    <div className="flex h-[19px] w-[32px] items-center border-r border-[#b0b0b0] pl-[4px]">
      <Svg w={15} h={15}><path d="M1.500 0v15M4.500 0v15M7.500 0v15M10.500 0v15M13.500 0v15" stroke="#b4b4b4" strokeWidth="2" /></Svg>
      <span className="ml-[2px]"><svg width="5" height="3" viewBox="0 0 5 3" className="block"><path d="M2.500 0L5 3H0z" fill="#444" /></svg></span>
    </div>
    <div className="ml-[1001px] flex h-[20px] w-[202px] items-center border-l border-t border-[#a8a8a8] pl-[4px] pt-[1px]">脚本</div>
    <div className="ml-[2px] flex h-[20px] w-[115px] items-center border-l border-t border-[#a8a8a8] bg-[#f6f6f6] pl-[5px] pt-[1px]">
      行<span className="ml-[11px] text-[13px]">15</span><span className="ml-[20px]">列</span><span className="ml-[12px] text-[13px]">30</span>
    </div>
  </div>
);

export default function App() {
  return (
    <div className="relative flex h-[768px] w-[1366px] flex-col overflow-hidden bg-[#f0f0f0] font-['Noto_Sans','Noto_Sans_CJK_SC',sans-serif]">
      <Defs />
      <div className="flex h-[23px] shrink-0 items-center bg-white pl-[5px] pt-[1px]">
        <Logo s={15} />
        <span className="ml-[3px] font-['Noto_Sans',sans-serif] text-[12.500px] text-[#8a8a8a]">MATLAB R2019a</span>
        <span className="ml-auto"><Win c="#8a8a8a" kind="min" /></span>
        <span className="ml-[28px]"><Win c="#8a8a8a" kind="res" /></span>
        <span className="ml-[34px] mr-[19px]"><Win c="#8a8a8a" kind="x" /></span>
      </div>
      <TopBar />
      <Ribbon />
      <AddressBar />
      <div className="flex h-[575px] shrink-0 pt-[1px]">
        <LeftPanels />
        <div className="w-[5px] shrink-0" />
        <Editor />
        <div className="ml-[2px] flex h-[70px] w-[22px] items-center justify-center rounded-l-[3px] bg-[linear-gradient(90deg,#fafafa,#d8d8d8)] text-[12px] leading-[14px] text-[#333] [text-orientation:sideways] [writing-mode:vertical-rl]">命令行窗口</div>
      </div>
      <Status />
      <div className="h-[2px] shrink-0 bg-[#3a3a3a]" />
      <Figure />
    </div>
  );
}
